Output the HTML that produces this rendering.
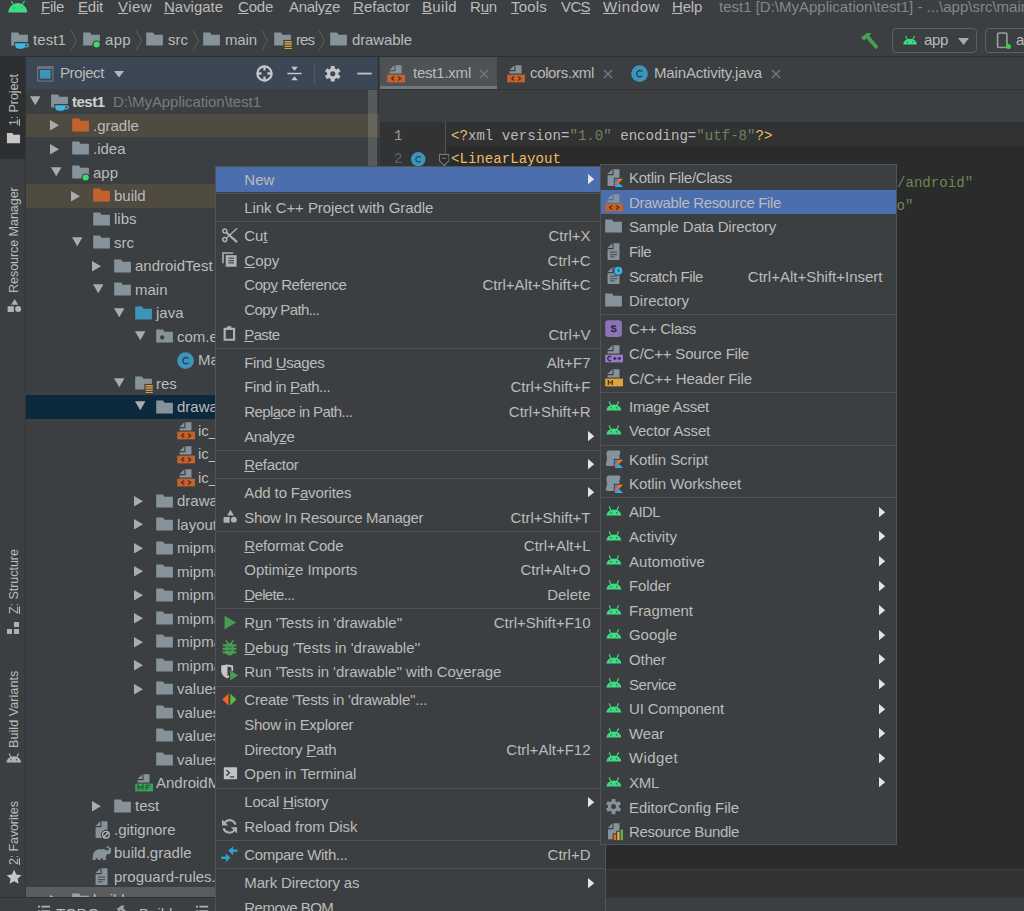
<!DOCTYPE html>
<html><head><meta charset="utf-8"><title>Android Studio</title>
<style>
*{margin:0;padding:0;box-sizing:border-box}
html,body{width:1024px;height:911px;overflow:hidden;background:#3c3f41}
body{position:relative;font-family:"Liberation Sans",sans-serif;font-size:15px;color:#bbbbbb;line-height:1}
.a{position:absolute}
.t{position:absolute;white-space:nowrap;line-height:20px;height:20px}
.mono{font-family:"Liberation Mono",monospace}
u{text-decoration:underline;text-underline-offset:1.3px;text-decoration-thickness:1px}
svg{position:absolute;overflow:visible}
.v{position:absolute;white-space:nowrap;transform-origin:0 0;transform:rotate(-90deg);font-size:12.6px;line-height:16px;height:16px;color:#bbbbbb}
</style></head><body>
<svg width="0" height="0" style="position:absolute"><defs><linearGradient id="kg" x1="1" y1="0" x2="0" y2="1"><stop offset="0" stop-color="#f88909"/><stop offset=".55" stop-color="#f06a2a"/><stop offset="1" stop-color="#c757bc"/></linearGradient><symbol id="folder" viewBox="0 0 16 16"><path fill="#87939a" d="M1 13h14V4H7.98L6.7 2H1z"/></symbol><symbol id="folder-o" viewBox="0 0 16 16"><path fill="#c4622d" d="M1 13h14V4H7.98L6.7 2H1z"/></symbol><symbol id="folder-b" viewBox="0 0 16 16"><path fill="#3e93b8" d="M1 13h14V4H7.98L6.7 2H1z"/></symbol><symbol id="module" viewBox="0 0 16 16"><path fill="#87939a" d="M1 13h14V4H7.98L6.7 2H1z"/><circle cx="12.3" cy="12.2" r="3.5" fill="#3c3f41"/><circle cx="12.3" cy="12.2" r="2.550" fill="#3fdc6c"/></symbol><symbol id="proj" viewBox="0 0 16 16"><path fill="#87939a" d="M1 13h14V4H7.98L6.7 2H1z"/><path fill="#3c3f41" d="M3.5 10h12.5v6H3.5z"/><path fill="#40b6e0" d="M4.3 11h8.6v1.4a3.4 3.4 0 0 1-3.4 3.4H7.7a3.4 3.4 0 0 1-3.4-3.4z"/><path fill="none" stroke="#40b6e0" stroke-width="1.1" d="M12.7 11.6h1.4a1.2 1.2 0 0 1 0 2.5h-1.6"/></symbol><symbol id="resf" viewBox="0 0 16 16"><path fill="#87939a" d="M1 13h14V4H7.98L6.7 2H1z"/><path fill="#3c3f41" d="M8.700 8.300h7.500v8H8.700z"/><path fill="#d9a343" d="M9.700 9.300h6v1.100h-6zM9.700 11.200h6v1.100h-6zM9.700 13.100h6v1.100h-6zM9.700 15h6v1.100h-6z"/></symbol><symbol id="pkg" viewBox="0 0 16 16"><path fill="#87939a" d="M1 13h14V4H7.98L6.7 2H1z"/><circle cx="6" cy="8.800" r="1.800" fill="#3c3f41"/></symbol><symbol id="class" viewBox="0 0 16 16"><circle cx="8" cy="8" r="7" fill="#3f94b9"/><path fill="none" stroke="#214a5f" stroke-width="1.200" d="M10.300 6.500a2.600 2.600 0 1 0 0 3.200"/></symbol><symbol id="xml" viewBox="0 0 16 16"><path fill="#87939a" d="M8 1h5v7H3V6h5z"/><path fill="#87939a" d="M7 1v4H3z"/><path fill="#c4622d" d="M1 8.900h15v6.500H1z"/><path stroke="#5a2d17" stroke-width="1.1" fill="none" d="M6.900 10.400L4.700 12.150l2.200 1.750M10.100 10.400l2.200 1.750-2.200 1.750"/></symbol><symbol id="mf" viewBox="0 0 16 16"><path fill="#87939a" d="M8 1h5v7H3V6h5z"/><path fill="#87939a" d="M7 1v4H3z"/><path fill="#3e9e5c" d="M1 8.900h15v6.500H1z"/><path stroke="#215f35" stroke-width="1" fill="none" d="M3.300 14.200v-4l2.100 2.600 2.100-2.600v4M13.500 10.400h-3.300v3.800M10.200 12.200h2.700"/></symbol><symbol id="txt" viewBox="0 0 16 16"><path fill="#87939a" d="M8 1h5v14H3V6h5z"/><path fill="#87939a" d="M7 1v4H3z"/><path stroke="#4c565c" stroke-width="1" d="M5 8.500h6M5 10.500h6M5 12.500h4"/></symbol><symbol id="giti" viewBox="0 0 16 16"><path fill="#87939a" d="M8 1h5v14H3V6h5z"/><path fill="#87939a" d="M7 1v4H3z"/><circle cx="11.700" cy="12.300" r="4.300" fill="#3c3f41"/><circle cx="11.700" cy="12.300" r="2.800" fill="none" stroke="#b4b8bb" stroke-width="1.100"/><path stroke="#b4b8bb" stroke-width="1.100" d="M9.800 14.200l3.800-3.800"/></symbol><symbol id="gradle" viewBox="0 0 16 16"><path fill="#87939a" d="M15.2 3.3c-.6-1.3-2-1.7-3-1.2-.6.3-.4 1 .1.9.7-.2 1.4.1 1.7.8.4 1-.6 2-1.6 1.600-.6-.2-1.200-.9-2.300-.9H6.500C3.600 4.500 1.200 6.600.8 9.400c-.2 1.300-.2 2.600-.2 4h2.300c0-1 .3-1.700 1-1.700s1 .700 1 1.700h2.300c0-1 .3-1.700 1-1.700s1 .7 1 1.700h2.300c0-2.200.200-3.800 1.300-5 .5.200 1.100.200 1.700-.100 1.900-.800 2.400-3.200 1.700-5z"/></symbol><symbol id="android" viewBox="0 0 16 16"><path fill="#3ddc84" d="M2 11.4a6.25 5.2 0 0 1 12.5 0z"/><path stroke="#3ddc84" stroke-width="1" stroke-linecap="round" fill="none" d="M5.7 7L4.5 4M10.8 7l1.3-3"/><circle cx="5.9" cy="9.1" r=".65" fill="#2f6b4a"/><circle cx="10.6" cy="9.1" r=".65" fill="#2f6b4a"/></symbol><symbol id="android-g" viewBox="0 0 16 16"><path fill="#afb1b3" d="M2 11.4a6.25 5.2 0 0 1 12.5 0z"/><path stroke="#afb1b3" stroke-width="1" stroke-linecap="round" fill="none" d="M5.7 7L4.5 4M10.8 7l1.3-3"/><circle cx="5.9" cy="9.1" r=".65" fill="#3c3f41"/><circle cx="10.6" cy="9.1" r=".65" fill="#3c3f41"/></symbol><symbol id="arr-r" viewBox="0 0 9 10.5"><path fill="#a9acae" d="M0 0l9 5.250-9 5.250z"/></symbol><symbol id="arr-d" viewBox="0 0 10.5 9"><path fill="#a9acae" d="M0 0h10.500L5.250 9z"/></symbol><symbol id="marr" viewBox="0 0 6 10"><path fill="#e4e4e4" d="M0 0l6 5-6 5z"/></symbol><symbol id="cut" viewBox="0 0 16 16"><g fill="none" stroke="#afb1b3"><circle cx="4" cy="4.200" r="1.700" stroke-width="1.300"/><circle cx="4" cy="11.400" r="1.700" stroke-width="1.300"/><path stroke-width="1.800" d="M5.300 5.500L14.300 13.500"/><path stroke-width="1.100" d="M5.300 10.200L14.300 1.900"/></g></symbol><symbol id="copy" viewBox="0 0 16 16"><path fill="none" stroke="#afb1b3" stroke-width="1.300" d="M2.500 10.300V1.600H11"/><path fill="#afb1b3" d="M4.800 3.500h9.100v9.700H4.800z"/><path stroke="#45494b" stroke-width="1.100" d="M7 5.900h4.700M7 8h4.700M7 10h4.700"/></symbol><symbol id="paste" viewBox="0 0 16 16"><path fill="none" stroke="#afb1b3" stroke-width="1.800" d="M3.900 3.300h7.900v9.100H3.900z"/><path fill="#afb1b3" d="M5.900 1h3.600v2.500H5.900z"/></symbol><symbol id="rm" viewBox="0 0 16 16"><path fill="#afb1b3" d="M8.800 2.400l2.800 4.700H5.900zM3 8.400h5.100v4.700H3z"/><circle cx="11.600" cy="10.600" r="2.450" fill="#afb1b3"/></symbol><symbol id="run" viewBox="0 0 16 16"><path fill="#499c54" d="M3.800 2.200L13.400 8 3.800 13.800z"/></symbol><symbol id="debug" viewBox="0 0 16 16"><g fill="#499c54"><rect x="4.700" y="4.200" width="6.600" height="10.500" rx="3.200"/><rect x="2.200" y="5.200" width="11.600" height="1.900" rx=".6"/><rect x="2.200" y="8.100" width="11.600" height="1.900" rx=".6"/><rect x="2.200" y="11" width="11.600" height="1.900" rx=".6"/></g><path stroke="#499c54" stroke-width="1.300" fill="none" d="M4.900 1.800l1.900 3M11.100 1.800l-1.900 3"/><path fill="#3c3f41" opacity=".75" d="M6.400 7.250h3.200v.8H6.400zM6.400 10.100h3.200v.8H6.400z"/></symbol><symbol id="cover" viewBox="0 0 16 16"><path fill="#c4c6c8" d="M1 3l5-1 5 1v4c0 3.500-2 5.500-5 6.800C3 12.500 1 10.500 1 7z"/><path fill="#3c3f41" d="M6.300 3.700l3.200.7V7c0 2.300-1.200 3.900-3.200 5z"/><path fill="#3c3f41" d="M7.600 5.800L16 11l-8.400 5.400z"/><path fill="#499c54" d="M8.500 6.900l6.700 4.200-6.700 4.300z"/></symbol><symbol id="create" viewBox="0 0 16 16"><path fill="#f26522" d="M7.200 3v10L1.900 8z"/><path fill="#62b543" d="M8.600 3v10l5.200-5z"/></symbol><symbol id="term" viewBox="0 0 16 16"><rect x="3.200" y="2.800" width="11.100" height="9.900" rx=".5" fill="#c0c2c4"/><path fill="none" stroke="#3c3f41" stroke-width="1.100" d="M5.300 5l2.600 2.400-2.600 2.400M8.300 10.800h3.700"/></symbol><symbol id="reload" viewBox="0 0 16 16"><g fill="none" stroke="#afb1b3" stroke-width="1.700"><path d="M13 6.400A5.100 5.100 0 0 0 4 4.700"/><path d="M3 9.400a5.100 5.100 0 0 0 9 1.700"/></g><path fill="#afb1b3" d="M1.700 2v5.200h5.200zM14.300 13.800V8.600H9.100z"/></symbol><symbol id="compare" viewBox="0 0 16 16"><g fill="#2f9fd6"><path d="M6.900 4.700L11 1v2.700h3.800v2H11v2.900z"/><path d="M8.700 10.700L4.900 7.100v2.600H1.100v2h3.800v2.800z"/></g></symbol><symbol id="ktfile" viewBox="0 0 16 16"><path fill="#87939a" d="M8 1h5v14H3V6h5z"/><path fill="#87939a" d="M7 1v4H3z"/><path fill="#3c3f41" d="M8.2 8.2H16V16H8.2z"/><path fill="#3a8bea" d="M9 9h3.5L9 12.700z"/><path fill="url(#kg)" d="M12.500 9H16l-7 7v-3.300z"/><path fill="#1fb4f5" d="M12.500 12.500L16 16H9z"/></symbol><symbol id="ktscript" viewBox="0 0 16 16"><path fill="#87939a" d="M3.800 1.200h8.800c1.300.2 1.400 1.500.8 2.800-.6 1.300-.7 2.500-.2 4.100v6.100H3.300c-1.600 0-2.200-1.300-1.500-2.900.8-1.700.8-3.200.5-5.200-.4-2.300-.1-4.900 1.500-4.900z"/><path fill="#3c3f41" d="M8.2 8.2H16V16H8.2z"/><path fill="#3a8bea" d="M9 9h3.5L9 12.700z"/><path fill="url(#kg)" d="M12.500 9H16l-7 7v-3.300z"/><path fill="#1fb4f5" d="M12.500 12.500L16 16H9z"/></symbol><symbol id="scratch" viewBox="0 0 16 16"><path fill="#87939a" d="M8 1h5v14H3V6h5z"/><path fill="#87939a" d="M7 1v4H3z"/><path stroke="#4c565c" stroke-width="1" d="M5 8.500h6M5 10.500h6M5 12.500h4"/><circle cx="12" cy="4" r="4.200" fill="#3c3f41"/><circle cx="12" cy="4" r="3.300" fill="#3bb3e6"/><path fill="none" stroke="#1d4a63" stroke-width="1" d="M12 2.200v2h1.300"/></symbol><symbol id="cppclass" viewBox="0 0 16 16"><rect x="1" y="1" width="14" height="14" rx="2.700" fill="#8c74b6"/><path fill="none" stroke="#3a2d52" stroke-width="1.500" d="M10 6.600C9.700 6 9 5.700 8.100 5.700c-1 0-1.700.4-1.700 1.100 0 1.600 3.600.7 3.600 2.400 0 .7-.8 1.200-1.800 1.200S6.400 10 6.100 9.300"/></symbol><symbol id="cpp" viewBox="0 0 16 16"><path fill="#87939a" d="M8 1h5v7H3V6h5z"/><path fill="#87939a" d="M7 1v4H3z"/><path fill="#9a7cc6" d="M1 8.900h15v6.500H1z"/><path fill="none" stroke="#3d2f57" stroke-width="1.200" d="M6 10.900a1.700 1.700 0 1 0 0 2.500M7.600 12.150h2.800M9 10.800v2.700M11.400 12.150h2.800M12.800 10.800v2.700"/></symbol><symbol id="hdr" viewBox="0 0 16 16"><path fill="#87939a" d="M8 1h5v7H3V6h5z"/><path fill="#87939a" d="M7 1v4H3z"/><path fill="#e2a338" d="M1 8.900h15v6.500H1z"/><path fill="none" stroke="#5a3f10" stroke-width="1.300" d="M3.700 10.100v4.100M7 10.100v4.100M3.700 12.150H7"/></symbol><symbol id="gear" viewBox="0 0 16 16"><path fill="#87939a" fill-rule="evenodd" d="M6.43 3.57L6.43 1.59L9.57 1.59L9.57 3.57L11.05 4.43L12.77 3.44L14.34 6.15L12.62 7.14L12.62 8.86L14.34 9.85L12.77 12.56L11.05 11.57L9.57 12.43L9.57 14.41L6.43 14.41L6.43 12.43L4.95 11.57L3.23 12.56L1.66 9.85L3.38 8.86L3.38 7.14L1.66 6.15L3.23 3.44L4.95 4.43zM5.90 8.00a2.10 2.10 0 1 0 4.20 0a2.10 2.10 0 1 0 -4.20 0z"/></symbol><symbol id="gear-l" viewBox="0 0 16 16"><path fill="#c4c6c8" fill-rule="evenodd" d="M6.43 3.57L6.43 1.59L9.57 1.59L9.57 3.57L11.05 4.43L12.77 3.44L14.34 6.15L12.62 7.14L12.62 8.86L14.34 9.85L12.77 12.56L11.05 11.57L9.57 12.43L9.57 14.41L6.43 14.41L6.43 12.43L4.95 11.57L3.23 12.56L1.66 9.85L3.38 8.86L3.38 7.14L1.66 6.15L3.23 3.44L4.95 4.43zM5.90 8.00a2.10 2.10 0 1 0 4.20 0a2.10 2.10 0 1 0 -4.20 0z"/></symbol><symbol id="bundle" viewBox="0 0 16 16"><path fill="#87939a" d="M8 1h5v13.500H3.400V6H8z"/><path fill="#87939a" d="M7 1v4H3.400z"/><path fill="#3c3f41" d="M7.300 9.400h2.900V7.300h2.900V5.400H16.500V16H7.300z"/><path fill="#f26522" d="M8.200 10.300h1.900v4.900H8.200z"/><path fill="#f4af3d" d="M11.100 8.200H13v7h-1.900z"/><path fill="#62b543" d="M13.900 6.300h2v8.900h-2z"/></symbol><symbol id="target" viewBox="0 0 16 16"><g fill="none" stroke="#c4c6c8" stroke-width="1.900"><circle cx="8" cy="8" r="6"/><path d="M8 1.500v4M8 10.500v4M1.500 8h4M10.500 8h4"/></g></symbol><symbol id="collapse" viewBox="0 0 16 16"><path fill="#c4c6c8" d="M2 7.300h12v1.400H2zM5.200 2.400h5.600L8 5.600zM5.200 13.600h5.600L8 10.400z"/></symbol><symbol id="minus" viewBox="0 0 16 16"><path fill="#c4c6c8" d="M2 7.300h12v1.500H2z"/></symbol><symbol id="hammer" viewBox="0 0 16 16"><path fill="#499c54" d="M.8 5.400L5.600 1.600h3.600L7.700 4.200l7.500 8.800-2.300 2-7.500-8.800L3.100 8.100z"/></symbol><symbol id="hammer-g" viewBox="0 0 16 16"><path fill="#9da0a2" d="M.8 5.400L5.600 1.600h3.600L7.700 4.200l7.500 8.800-2.300 2-7.500-8.800L3.100 8.100z"/></symbol><symbol id="device" viewBox="0 0 16 16"><rect x="3.500" y="1" width="9" height="14" rx="1.300" fill="none" stroke="#9a9da0" stroke-width="1.600"/></symbol><symbol id="star" viewBox="0 0 16 16"><path fill="#c4c6c8" d="M8 .8l2.200 4.700 5.100.6-3.800 3.500 1 5.100L8 12.200l-4.500 2.500 1-5.100L.7 6.100l5.100-.6z"/></symbol><symbol id="struct" viewBox="0 0 16 16"><path fill="#afb1b3" d="M9 2h5v5H9zM2 9h5v5H2zM9 9h5v5H9z"/></symbol><symbol id="list" viewBox="0 0 16 16"><path fill="#afb1b3" d="M1 2h2.500v2H1zM5 2h10v2H5zM1 7h2.500v2H1zM5 7h10v2H5zM1 12h2.500v2H1zM5 12h10v2H5z"/></symbol><symbol id="fsm" viewBox="0 0 16 16"><path fill="#c4c6c8" d="M1 13h14V4H7.98L6.7 2H1z"/></symbol><symbol id="x" viewBox="0 0 10 10"><path stroke="#777a7c" stroke-width="1.200" fill="none" d="M1 1l8 8M9 1l-8 8"/></symbol><symbol id="fold" viewBox="0 0 10 12"><path fill="#2b2b2b" stroke="#7a7d80" stroke-width="1" d="M.5.500h9v6L5 11 .5 6.500z"/><path stroke="#7a7d80" stroke-width="1" d="M3 4h4"/></symbol></defs></svg>
<div class="a" style="left:0.0px;top:0.0px;width:1024.0px;height:22.0px;background:#3c3f41;"></div>
<div class="a" style="left:0.0px;top:22.0px;width:1024.0px;height:1.0px;background:#414446;"></div>
<div class="a" style="left:0.0px;top:23.0px;width:1024.0px;height:1.0px;background:#474a4c;"></div>
<svg class="a" style="left:0;top:0" width="40" height="20"><path fill="#3ddc84" d="M8.200 12.600a9.550 9.500 0 0 1 19.100 0z"/><path stroke="#3ddc84" stroke-width="1.100" stroke-linecap="round" d="M13.400 4.500L11.400 1.300M22.200 4.500l2.200-3.200"/><circle cx="13.900" cy="7.900" r=".700" fill="#2a8a55"/><circle cx="21.700" cy="7.900" r=".700" fill="#2a8a55"/></svg>
<div class="t" style="left:41.0px;top:-3.1px;font-size:15px;letter-spacing:-0.292px;"><u>F</u>ile</div>
<div class="t" style="left:78.0px;top:-3.1px;font-size:15px;letter-spacing:-0.212px;"><u>E</u>dit</div>
<div class="t" style="left:118.0px;top:-3.1px;font-size:15px;letter-spacing:0.440px;"><u>V</u>iew</div>
<div class="t" style="left:164.0px;top:-3.1px;font-size:15px;letter-spacing:-0.025px;"><u>N</u>avigate</div>
<div class="t" style="left:238.0px;top:-3.1px;font-size:15px;letter-spacing:-0.214px;"><u>C</u>ode</div>
<div class="t" style="left:289.0px;top:-3.1px;font-size:15px;letter-spacing:-0.338px;">Analy<u>z</u>e</div>
<div class="t" style="left:353.0px;top:-3.1px;font-size:15px;letter-spacing:0.039px;"><u>R</u>efactor</div>
<div class="t" style="left:422.0px;top:-3.1px;font-size:15px;letter-spacing:0.329px;"><u>B</u>uild</div>
<div class="t" style="left:470.0px;top:-3.1px;font-size:15px;letter-spacing:-0.172px;">R<u>u</u>n</div>
<div class="t" style="left:511.0px;top:-3.1px;font-size:15px;letter-spacing:0.197px;"><u>T</u>ools</div>
<div class="t" style="left:561.0px;top:-3.1px;font-size:15px;letter-spacing:-0.615px;">VC<u>S</u></div>
<div class="t" style="left:603.0px;top:-3.1px;font-size:15px;letter-spacing:0.609px;"><u>W</u>indow</div>
<div class="t" style="left:672.0px;top:-3.1px;font-size:15px;letter-spacing:-0.212px;"><u>H</u>elp</div>
<div class="t" style="left:719.0px;top:-3.0px;font-size:15px;color:#84878a;">test1 [D:\MyApplication\test1] - ...\app\src\main\res</div>
<div class="a" style="left:0.0px;top:23.0px;width:1024.0px;height:33.0px;background:#3c3f41;"></div>
<div class="a" style="left:0.0px;top:56.0px;width:1024.0px;height:1.0px;background:#2d2f30;"></div>
<svg class="a" style="left:9.5px;top:30.0px" width="19.1" height="19.1" ><use href="#proj"/></svg>
<div class="t" style="left:33.0px;top:30.0px;font-size:15px;letter-spacing:0.096px;">test1</div>
<svg class="a" style="left:70.0px; top:30px" width="8" height="21"><path d="M1 .5l5.500 10L1 20.500" fill="none" stroke="#5e6163" stroke-width="1"/></svg>
<svg class="a" style="left:81.5px;top:30.0px" width="19.1" height="19.1" ><use href="#module"/></svg>
<div class="t" style="left:105.0px;top:30.0px;font-size:15px;letter-spacing:0.325px;">app</div>
<svg class="a" style="left:135.0px; top:30px" width="8" height="21"><path d="M1 .5l5.500 10L1 20.500" fill="none" stroke="#5e6163" stroke-width="1"/></svg>
<svg class="a" style="left:144.5px;top:30.0px" width="19.1" height="19.1" ><use href="#folder"/></svg>
<div class="t" style="left:168.0px;top:30.0px;font-size:15px;letter-spacing:0.001px;">src</div>
<svg class="a" style="left:192.0px; top:30px" width="8" height="21"><path d="M1 .5l5.500 10L1 20.500" fill="none" stroke="#5e6163" stroke-width="1"/></svg>
<svg class="a" style="left:201.5px;top:30.0px" width="19.1" height="19.1" ><use href="#folder"/></svg>
<div class="t" style="left:225.0px;top:30.0px;font-size:15px;letter-spacing:-0.128px;">main</div>
<svg class="a" style="left:261.0px; top:30px" width="8" height="21"><path d="M1 .5l5.500 10L1 20.500" fill="none" stroke="#5e6163" stroke-width="1"/></svg>
<svg class="a" style="left:272.5px;top:30.0px" width="19.1" height="19.1" ><use href="#resf"/></svg>
<div class="t" style="left:296.0px;top:30.0px;font-size:15px;letter-spacing:-0.946px;">res</div>
<svg class="a" style="left:318.0px; top:30px" width="8" height="21"><path d="M1 .5l5.500 10L1 20.500" fill="none" stroke="#5e6163" stroke-width="1"/></svg>
<svg class="a" style="left:328.5px;top:30.0px" width="19.1" height="19.1" ><use href="#folder"/></svg>
<div class="t" style="left:352.0px;top:30.0px;font-size:15px;letter-spacing:-0.109px;">drawable</div>
<svg class="a" style="left:859.5px;top:30.5px" width="19.5" height="19.5" ><use href="#hammer"/></svg>
<div class="a" style="left:892px;top:27.5px;width:85px;height:25.5px;border:1px solid #5e6062;border-radius:4px"></div>
<svg class="a" style="left:901.0px;top:31.5px" width="17.5" height="17.5" ><use href="#android"/></svg>
<div class="t" style="left:924.0px;top:30.0px;font-size:15px;letter-spacing:-0.342px;">app</div>
<svg class="a" style="left:958.3px;top:37.5px" width="10.5" height="6.5"><path d="M0 0h11L5.500 7z" fill="#a8abad"/></svg>
<div class="a" style="left:985px;top:27.5px;width:60px;height:25.5px;border:1px solid #5e6062;border-radius:4px"></div>
<svg class="a" style="left:994.3px;top:32.0px" width="16.5" height="16.5" ><use href="#device"/></svg>
<div class="a" style="left:1006.3px;top:44.3px;width:5px;height:5px;border-radius:3px;background:#35d335"></div>
<div class="t" style="left:1016.0px;top:30.0px;font-size:15px;">a</div>
<div class="a" style="left:0.0px;top:57.0px;width:25.0px;height:840.0px;background:#3c3f41;"></div>
<div class="a" style="left:0.0px;top:57.0px;width:25.0px;height:102.0px;background:#2d2f30;"></div>
<div class="a" style="left:25.0px;top:57.0px;width:1.0px;height:840.0px;background:#323537;"></div>
<div class="v" style="left:6.0px;top:125.5px;letter-spacing:-0.133px"><u>1</u>: Project</div>
<svg class="a" style="left:5.8px;top:130.8px" width="15.0" height="15.0" ><use href="#fsm"/></svg>
<div class="v" style="left:6.0px;top:292.5px;letter-spacing:-0.086px">Resource Manager</div>
<svg class="a" style="left:3.6px;top:295.6px" width="19.5" height="19.5" ><use href="#rm"/></svg>
<div class="v" style="left:6.0px;top:613.5px;letter-spacing:-0.079px"><u>Z</u>: Structure</div>
<svg class="a" style="left:5.0px;top:619.5px" width="16.0" height="16.0" ><use href="#struct"/></svg>
<div class="v" style="left:6.0px;top:747.5px;letter-spacing:0.039px">Build Variants</div>
<svg class="a" style="left:3.8px;top:749.2px" width="19.0" height="19.0" ><use href="#android-g"/></svg>
<div class="v" style="left:6.0px;top:865.0px;letter-spacing:-0.163px"><u>2</u>: Favorites</div>
<svg class="a" style="left:5.6px;top:868.6px" width="16.2" height="16.2" ><use href="#star"/></svg>
<div class="a" style="left:26.0px;top:57.0px;width:351.0px;height:32.0px;background:#3b4754;"></div>
<div class="a" style="left:378.2px;top:57.0px;width:1.3px;height:840.0px;background:#313436;"></div>
<svg class="a" style="left:36.600px;top:66px" width="17" height="16"><rect x=".6" y=".6" width="15.300" height="14.500" fill="#3b4754" stroke="#69747c" stroke-width="1.200"/><rect x=".6" y=".6" width="15.300" height="2.400" fill="#69747c"/><rect x="2.900" y="4" width="10.700" height="8.600" fill="#3f94b9"/></svg>
<div class="t" style="left:60.0px;top:63.0px;font-size:15px;letter-spacing:-0.384px;">Project</div>
<svg class="a" style="left:113.700px;top:71.200px" width="10" height="6.500"><path d="M0 0h10L5 6.500z" fill="#b4b7b9"/></svg>
<svg class="a" style="left:254.5px;top:63.5px" width="19.0" height="19.0" ><use href="#target"/></svg>
<svg class="a" style="left:285.0px;top:63.5px" width="19.0" height="19.0" ><use href="#collapse"/></svg>
<div class="a" style="left:313.5px;top:63.0px;width:1.0px;height:21.0px;background:#4f5a66;"></div>
<svg class="a" style="left:323.0px;top:63.5px" width="19.5" height="19.5" ><use href="#gear-l"/></svg>
<svg class="a" style="left:354.5px;top:63.5px" width="19.0" height="19.0" ><use href="#minus"/></svg>
<div class="a" style="left:26px;top:89px;width:353px;height:808px;overflow:hidden">
<svg class="a" style="left:4.1px;top:7.1px" width="10.500" height="9.500"><use href="#arr-d"/></svg>
<svg class="a" style="left:24.3px;top:3.4px" width="19.1" height="19.1" ><use href="#proj"/></svg>
<div class="t" style="left:46.0px;top:3.0px;font-size:15px;color:#d0d0d0;letter-spacing:-0.504px;font-weight:bold;">test1</div>
<div class="t" style="left:87.0px;top:3.0px;font-size:15px;color:#787b7d;letter-spacing:-0.056px;">D:\MyApplication\test1</div>
<div class="a" style="left:0.0px;top:24.7px;width:353.0px;height:23.5px;background:#4f4b41;"></div>
<svg class="a" style="left:24.2px;top:31.0px" width="9" height="10.500"><use href="#arr-r"/></svg>
<svg class="a" style="left:45.3px;top:26.9px" width="19.1" height="19.1" ><use href="#folder-o"/></svg>
<div class="t" style="left:67.0px;top:26.5px;font-size:15px;">.gradle</div>
<svg class="a" style="left:24.2px;top:54.5px" width="9" height="10.500"><use href="#arr-r"/></svg>
<svg class="a" style="left:45.3px;top:50.3px" width="19.1" height="19.1" ><use href="#folder"/></svg>
<div class="t" style="left:67.0px;top:50.0px;font-size:15px;">.idea</div>
<svg class="a" style="left:25.1px;top:77.6px" width="10.500" height="9.500"><use href="#arr-d"/></svg>
<svg class="a" style="left:45.3px;top:73.8px" width="19.1" height="19.1" ><use href="#module"/></svg>
<div class="t" style="left:67.0px;top:73.5px;font-size:15px;">app</div>
<div class="a" style="left:0.0px;top:95.1px;width:353.0px;height:23.5px;background:#4f4b41;"></div>
<svg class="a" style="left:45.2px;top:101.5px" width="9" height="10.500"><use href="#arr-r"/></svg>
<svg class="a" style="left:66.3px;top:97.3px" width="19.1" height="19.1" ><use href="#folder-o"/></svg>
<div class="t" style="left:88.0px;top:97.0px;font-size:15px;">build</div>
<svg class="a" style="left:66.3px;top:120.8px" width="19.1" height="19.1" ><use href="#folder"/></svg>
<div class="t" style="left:88.0px;top:120.4px;font-size:15px;">libs</div>
<svg class="a" style="left:46.1px;top:148.0px" width="10.500" height="9.500"><use href="#arr-d"/></svg>
<svg class="a" style="left:66.3px;top:144.3px" width="19.1" height="19.1" ><use href="#folder"/></svg>
<div class="t" style="left:88.0px;top:143.9px;font-size:15px;">src</div>
<svg class="a" style="left:66.2px;top:171.9px" width="9" height="10.500"><use href="#arr-r"/></svg>
<svg class="a" style="left:87.3px;top:167.8px" width="19.1" height="19.1" ><use href="#folder"/></svg>
<div class="t" style="left:109.0px;top:167.4px;font-size:15px;">androidTest</div>
<svg class="a" style="left:67.1px;top:195.0px" width="10.500" height="9.500"><use href="#arr-d"/></svg>
<svg class="a" style="left:87.3px;top:191.2px" width="19.1" height="19.1" ><use href="#folder"/></svg>
<div class="t" style="left:109.0px;top:190.9px;font-size:15px;">main</div>
<svg class="a" style="left:88.1px;top:218.5px" width="10.500" height="9.500"><use href="#arr-d"/></svg>
<svg class="a" style="left:108.3px;top:214.7px" width="19.1" height="19.1" ><use href="#folder-b"/></svg>
<div class="t" style="left:130.0px;top:214.4px;font-size:15px;">java</div>
<svg class="a" style="left:109.1px;top:241.9px" width="10.500" height="9.500"><use href="#arr-d"/></svg>
<svg class="a" style="left:129.3px;top:238.2px" width="19.1" height="19.1" ><use href="#pkg"/></svg>
<div class="t" style="left:151.0px;top:237.8px;font-size:15px;">com.example.test1</div>
<svg class="a" style="left:150.3px;top:261.7px" width="19.1" height="19.1" ><use href="#class"/></svg>
<div class="t" style="left:172.0px;top:261.3px;font-size:15px;">MainActivity</div>
<svg class="a" style="left:88.1px;top:288.9px" width="10.500" height="9.500"><use href="#arr-d"/></svg>
<svg class="a" style="left:108.3px;top:285.1px" width="19.1" height="19.1" ><use href="#resf"/></svg>
<div class="t" style="left:130.0px;top:284.8px;font-size:15px;">res</div>
<div class="a" style="left:0.0px;top:306.4px;width:353.0px;height:23.5px;background:#0d293e;"></div>
<svg class="a" style="left:109.1px;top:312.4px" width="10.500" height="9.500"><use href="#arr-d"/></svg>
<svg class="a" style="left:129.3px;top:308.6px" width="19.1" height="19.1" ><use href="#folder"/></svg>
<div class="t" style="left:151.0px;top:308.3px;font-size:15px;">drawable</div>
<svg class="a" style="left:150.3px;top:332.1px" width="19.1" height="19.1" ><use href="#xml"/></svg>
<div class="t" style="left:172.0px;top:331.8px;font-size:15px;">ic_launcher_background.xml</div>
<svg class="a" style="left:150.3px;top:355.6px" width="19.1" height="19.1" ><use href="#xml"/></svg>
<div class="t" style="left:172.0px;top:355.2px;font-size:15px;">ic_launcher_foreground.xml</div>
<svg class="a" style="left:150.3px;top:379.1px" width="19.1" height="19.1" ><use href="#xml"/></svg>
<div class="t" style="left:172.0px;top:378.7px;font-size:15px;">ic_test.xml</div>
<svg class="a" style="left:108.2px;top:406.7px" width="9" height="10.500"><use href="#arr-r"/></svg>
<svg class="a" style="left:129.3px;top:402.6px" width="19.1" height="19.1" ><use href="#folder"/></svg>
<div class="t" style="left:151.0px;top:402.2px;font-size:15px;">drawable-v24</div>
<svg class="a" style="left:108.2px;top:430.2px" width="9" height="10.500"><use href="#arr-r"/></svg>
<svg class="a" style="left:129.3px;top:426.0px" width="19.1" height="19.1" ><use href="#folder"/></svg>
<div class="t" style="left:151.0px;top:425.7px;font-size:15px;">layout</div>
<svg class="a" style="left:108.2px;top:453.7px" width="9" height="10.500"><use href="#arr-r"/></svg>
<svg class="a" style="left:129.3px;top:449.5px" width="19.1" height="19.1" ><use href="#folder"/></svg>
<div class="t" style="left:151.0px;top:449.2px;font-size:15px;">mipmap-anydpi-v26</div>
<svg class="a" style="left:108.2px;top:477.1px" width="9" height="10.500"><use href="#arr-r"/></svg>
<svg class="a" style="left:129.3px;top:473.0px" width="19.1" height="19.1" ><use href="#folder"/></svg>
<div class="t" style="left:151.0px;top:472.6px;font-size:15px;">mipmap-hdpi</div>
<svg class="a" style="left:108.2px;top:500.6px" width="9" height="10.500"><use href="#arr-r"/></svg>
<svg class="a" style="left:129.3px;top:496.5px" width="19.1" height="19.1" ><use href="#folder"/></svg>
<div class="t" style="left:151.0px;top:496.1px;font-size:15px;">mipmap-mdpi</div>
<svg class="a" style="left:108.2px;top:524.1px" width="9" height="10.500"><use href="#arr-r"/></svg>
<svg class="a" style="left:129.3px;top:520.0px" width="19.1" height="19.1" ><use href="#folder"/></svg>
<div class="t" style="left:151.0px;top:519.6px;font-size:15px;">mipmap-xhdpi</div>
<svg class="a" style="left:108.2px;top:547.6px" width="9" height="10.500"><use href="#arr-r"/></svg>
<svg class="a" style="left:129.3px;top:543.4px" width="19.1" height="19.1" ><use href="#folder"/></svg>
<div class="t" style="left:151.0px;top:543.1px;font-size:15px;">mipmap-xxhdpi</div>
<svg class="a" style="left:108.2px;top:571.1px" width="9" height="10.500"><use href="#arr-r"/></svg>
<svg class="a" style="left:129.3px;top:566.9px" width="19.1" height="19.1" ><use href="#folder"/></svg>
<div class="t" style="left:151.0px;top:566.6px;font-size:15px;">mipmap-xxxhdpi</div>
<svg class="a" style="left:108.2px;top:594.5px" width="9" height="10.500"><use href="#arr-r"/></svg>
<svg class="a" style="left:129.3px;top:590.4px" width="19.1" height="19.1" ><use href="#folder"/></svg>
<div class="t" style="left:151.0px;top:590.0px;font-size:15px;">values</div>
<svg class="a" style="left:129.3px;top:613.9px" width="19.1" height="19.1" ><use href="#folder"/></svg>
<div class="t" style="left:151.0px;top:613.5px;font-size:15px;">values-night</div>
<svg class="a" style="left:129.3px;top:637.4px" width="19.1" height="19.1" ><use href="#folder"/></svg>
<div class="t" style="left:151.0px;top:637.0px;font-size:15px;">values-v21</div>
<svg class="a" style="left:129.3px;top:660.8px" width="19.1" height="19.1" ><use href="#folder"/></svg>
<div class="t" style="left:151.0px;top:660.5px;font-size:15px;">values-v23</div>
<svg class="a" style="left:108.3px;top:684.3px" width="19.1" height="19.1" ><use href="#mf"/></svg>
<div class="t" style="left:130.0px;top:684.0px;font-size:15px;">AndroidManifest.xml</div>
<svg class="a" style="left:66.2px;top:711.9px" width="9" height="10.500"><use href="#arr-r"/></svg>
<svg class="a" style="left:87.3px;top:707.8px" width="19.1" height="19.1" ><use href="#folder"/></svg>
<div class="t" style="left:109.0px;top:707.4px;font-size:15px;">test</div>
<svg class="a" style="left:66.3px;top:731.3px" width="19.1" height="19.1" ><use href="#giti"/></svg>
<div class="t" style="left:88.0px;top:730.9px;font-size:15px;">.gitignore</div>
<svg class="a" style="left:66.3px;top:754.8px" width="19.1" height="19.1" ><use href="#gradle"/></svg>
<div class="t" style="left:88.0px;top:754.4px;font-size:15px;">build.gradle</div>
<svg class="a" style="left:66.3px;top:778.2px" width="19.1" height="19.1" ><use href="#txt"/></svg>
<div class="t" style="left:88.0px;top:777.9px;font-size:15px;">proguard-rules.pro</div>
<svg class="a" style="left:24.2px;top:805.9px" width="9" height="10.500"><use href="#arr-r"/></svg>
<svg class="a" style="left:45.3px;top:801.7px" width="19.1" height="19.1" ><use href="#folder"/></svg>
<div class="t" style="left:67.0px;top:801.4px;font-size:15px;">build</div>
</div>
<div class="a" style="left:368.0px;top:90.0px;width:9.0px;height:76.0px;background:rgba(255,255,255,0.140);"></div>
<div class="a" style="left:26.0px;top:887.0px;width:191.0px;height:9.5px;background:rgba(255,255,255,0.155);"></div>
<div class="a" style="left:0.0px;top:897.0px;width:1024.0px;height:1.0px;background:#2f3133;"></div>
<div class="a" style="left:0.0px;top:898.0px;width:1024.0px;height:13.0px;background:#3c3f41;"></div>
<svg class="a" style="left:37.0px;top:904.0px" width="14.0" height="14.0" ><use href="#list"/></svg>
<div class="t" style="left:56.0px;top:904.0px;font-size:15px;">TODO</div>
<svg class="a" style="left:116.0px;top:904.0px" width="15.0" height="15.0" ><use href="#hammer-g"/></svg>
<div class="t" style="left:139.0px;top:904.0px;font-size:15px;">Build</div>
<svg class="a" style="left:195.0px;top:904.0px" width="14.0" height="14.0" ><use href="#list"/></svg>
<div class="a" style="left:380.0px;top:57.0px;width:644.0px;height:32.0px;background:#3c3f41;"></div>
<div class="a" style="left:380.0px;top:57.0px;width:117.0px;height:32.0px;background:#4e5254;"></div>
<div class="a" style="left:380.0px;top:85.5px;width:117.0px;height:3.5px;background:#72777b;"></div>
<div class="a" style="left:380.0px;top:89.0px;width:644.0px;height:1.0px;background:#323232;"></div>
<svg class="a" style="left:386.0px;top:63.5px" width="19.1" height="19.1" ><use href="#xml"/></svg>
<div class="t" style="left:413.0px;top:63.0px;font-size:15px;letter-spacing:-0.224px;">test1.xml</div>
<svg class="a" style="left:479.0px;top:68.5px" width="10.0" height="10.0" ><use href="#x"/></svg>
<svg class="a" style="left:506.0px;top:63.5px" width="19.1" height="19.1" ><use href="#xml"/></svg>
<div class="t" style="left:530.0px;top:63.0px;font-size:15px;letter-spacing:-0.351px;">colors.xml</div>
<svg class="a" style="left:602.5px;top:68.5px" width="10.0" height="10.0" ><use href="#x"/></svg>
<svg class="a" style="left:629.5px;top:63.5px" width="19.1" height="19.1" ><use href="#class"/></svg>
<div class="t" style="left:654.0px;top:63.0px;font-size:15px;letter-spacing:-0.152px;">MainActivity.java</div>
<svg class="a" style="left:770.5px;top:68.5px" width="10.0" height="10.0" ><use href="#x"/></svg>
<div class="a" style="left:380.0px;top:90.0px;width:644.0px;height:32.0px;background:#3c3f41;"></div>
<div class="a" style="left:380.0px;top:122.0px;width:644.0px;height:748.0px;background:#2b2b2b;"></div>
<div class="a" style="left:445.0px;top:122.0px;width:579.0px;height:24.3px;background:#323232;"></div>
<div class="a" style="left:380.0px;top:122.0px;width:65.0px;height:748.0px;background:#313335;"></div>
<div class="a" style="left:444.5px;top:122.0px;width:1.0px;height:748.0px;background:#555555;"></div>
<div class="a" style="left:380.0px;top:869.3px;width:644.0px;height:1.0px;background:#3a3d3f;"></div>
<div class="a" style="left:380.0px;top:870.3px;width:644.0px;height:27.7px;background:#313335;"></div>
<div class="t" style="left:394.0px;top:126.0px;font-size:14.100px;font-family:'Liberation Mono',monospace;"><span style="color:#999a9a">1</span></div>
<div class="t" style="left:394.0px;top:149.0px;font-size:14.100px;font-family:'Liberation Mono',monospace;"><span style="color:#606366">2</span></div>
<svg class="a" style="left:409.5px;top:150.5px" width="16.5" height="16.5" ><use href="#class"/></svg>
<svg class="a" style="left:439px;top:153.500px" width="10.500" height="12.500"><use href="#fold"/></svg>
<div class="t" style="left:451.0px;top:126.0px;font-size:14.100px;font-family:'Liberation Mono',monospace;"><span style="color:#e8bf6a">&lt;?</span><span style="color:#bababa">xml version=</span><span style="color:#6a8759">"1.0"</span><span style="color:#bababa"> encoding=</span><span style="color:#6a8759">"utf-8"</span><span style="color:#e8bf6a">?&gt;</span></div>
<div class="t" style="left:451.0px;top:149.0px;font-size:14.100px;font-family:'Liberation Mono',monospace;"><span style="color:#e8bf6a">&lt;LinearLayout</span></div>
<div class="t" style="left:897.0px;top:172.5px;font-size:14.100px;font-family:'Liberation Mono',monospace;"><span style="color:#6a8759">/android"</span></div>
<div class="t" style="left:888.0px;top:195.5px;font-size:14.100px;font-family:'Liberation Mono',monospace;"><span style="color:#6a8759">to"</span></div>
<div class="a" style="left:215.0px;top:166.0px;width:390.5px;height:760.0px;background:#3c3f41;border:1px solid #515457;overflow:hidden">
<div class="a" style="left:0.0px;top:0.0px;width:390.5px;height:24.6px;background:#4b6eaf;"></div>
<div class="t" style="left:28.3px;top:2.9px;letter-spacing:-0.002px;">New</div>
<svg class="a" style="left:371.5px;top:7.3px" width="6.2" height="10.4"><use href="#marr"/></svg>
<div class="a" style="left:0.0px;top:26.2px;width:390.5px;height:1.0px;background:#515456;"></div>
<div class="t" style="left:28.3px;top:31.1px;letter-spacing:-0.069px;">Link C++ Project with Gradle</div>
<div class="a" style="left:0.0px;top:54.3px;width:390.5px;height:1.0px;background:#515456;"></div>
<svg class="a" style="left:3.7px;top:59.1px" width="19.1" height="19.1" ><use href="#cut"/></svg>
<div class="t" style="left:28.3px;top:59.2px;letter-spacing:-0.114px;">Cu<u>t</u></div>
<div class="t" style="right:14.0px;top:59.2px;">Ctrl+X</div>
<svg class="a" style="left:3.7px;top:83.7px" width="19.1" height="19.1" ><use href="#copy"/></svg>
<div class="t" style="left:28.3px;top:83.8px;letter-spacing:-0.004px;"><u>C</u>opy</div>
<div class="t" style="right:14.0px;top:83.8px;">Ctrl+C</div>
<div class="t" style="left:28.3px;top:108.4px;letter-spacing:-0.456px;">Cop<u>y</u> Reference</div>
<div class="t" style="right:14.0px;top:108.4px;">Ctrl+Alt+Shift+C</div>
<div class="t" style="left:28.3px;top:133.0px;letter-spacing:-0.629px;">Copy Path...</div>
<svg class="a" style="left:3.7px;top:157.5px" width="19.1" height="19.1" ><use href="#paste"/></svg>
<div class="t" style="left:28.3px;top:157.6px;letter-spacing:-0.671px;"><u>P</u>aste</div>
<div class="t" style="right:14.0px;top:157.6px;">Ctrl+V</div>
<div class="a" style="left:0.0px;top:180.9px;width:390.5px;height:1.0px;background:#515456;"></div>
<div class="t" style="left:28.3px;top:185.8px;letter-spacing:-0.382px;">Find <u>U</u>sages</div>
<div class="t" style="right:14.0px;top:185.8px;">Alt+F7</div>
<div class="t" style="left:28.3px;top:210.4px;letter-spacing:-0.437px;">Find in <u>P</u>ath...</div>
<div class="t" style="right:14.0px;top:210.4px;">Ctrl+Shift+F</div>
<div class="t" style="left:28.3px;top:235.0px;letter-spacing:-0.578px;">Repl<u>a</u>ce in Path...</div>
<div class="t" style="right:14.0px;top:235.0px;">Ctrl+Shift+R</div>
<div class="t" style="left:28.3px;top:259.6px;letter-spacing:-0.480px;">Analy<u>z</u>e</div>
<svg class="a" style="left:371.5px;top:264.0px" width="6.2" height="10.4"><use href="#marr"/></svg>
<div class="a" style="left:0.0px;top:282.9px;width:390.5px;height:1.0px;background:#515456;"></div>
<div class="t" style="left:28.3px;top:287.7px;letter-spacing:-0.336px;"><u>R</u>efactor</div>
<svg class="a" style="left:371.5px;top:292.1px" width="6.2" height="10.4"><use href="#marr"/></svg>
<div class="a" style="left:0.0px;top:311.0px;width:390.5px;height:1.0px;background:#515456;"></div>
<div class="t" style="left:28.3px;top:315.9px;letter-spacing:-0.139px;">Add to F<u>a</u>vorites</div>
<svg class="a" style="left:371.5px;top:320.3px" width="6.2" height="10.4"><use href="#marr"/></svg>
<svg class="a" style="left:3.7px;top:340.4px" width="19.1" height="19.1" ><use href="#rm"/></svg>
<div class="t" style="left:28.3px;top:340.5px;letter-spacing:-0.289px;">Show In Resource Manager</div>
<div class="t" style="right:14.0px;top:340.5px;">Ctrl+Shift+T</div>
<div class="a" style="left:0.0px;top:363.8px;width:390.5px;height:1.0px;background:#515456;"></div>
<div class="t" style="left:28.3px;top:368.7px;letter-spacing:-0.209px;"><u>R</u>eformat Code</div>
<div class="t" style="right:14.0px;top:368.7px;">Ctrl+Alt+L</div>
<div class="t" style="left:28.3px;top:393.3px;letter-spacing:-0.022px;">Optimi<u>z</u>e Imports</div>
<div class="t" style="right:14.0px;top:393.3px;">Ctrl+Alt+O</div>
<div class="t" style="left:28.3px;top:417.9px;letter-spacing:-0.651px;"><u>D</u>elete...</div>
<div class="t" style="right:14.0px;top:417.9px;">Delete</div>
<div class="a" style="left:0.0px;top:441.1px;width:390.5px;height:1.0px;background:#515456;"></div>
<svg class="a" style="left:3.7px;top:445.9px" width="19.1" height="19.1" ><use href="#run"/></svg>
<div class="t" style="left:28.3px;top:446.0px;letter-spacing:-0.041px;">R<u>u</u>n 'Tests in 'drawable''</div>
<div class="t" style="right:14.0px;top:446.0px;">Ctrl+Shift+F10</div>
<svg class="a" style="left:3.7px;top:470.5px" width="19.1" height="19.1" ><use href="#debug"/></svg>
<div class="t" style="left:28.3px;top:470.6px;letter-spacing:0.011px;"><u>D</u>ebug 'Tests in 'drawable''</div>
<svg class="a" style="left:3.7px;top:495.1px" width="19.1" height="19.1" ><use href="#cover"/></svg>
<div class="t" style="left:28.3px;top:495.2px;letter-spacing:-0.053px;">Run 'Tests in 'drawable'' with Co<u>v</u>erage</div>
<div class="a" style="left:0.0px;top:518.5px;width:390.5px;height:1.0px;background:#515456;"></div>
<svg class="a" style="left:3.7px;top:523.2px" width="19.1" height="19.1" ><use href="#create"/></svg>
<div class="t" style="left:28.3px;top:523.4px;letter-spacing:-0.195px;">Create 'Tests in 'drawable''...</div>
<div class="t" style="left:28.3px;top:548.0px;letter-spacing:-0.274px;">Show in Explorer</div>
<div class="t" style="left:28.3px;top:572.6px;letter-spacing:-0.217px;">Directory <u>P</u>ath</div>
<div class="t" style="right:14.0px;top:572.6px;">Ctrl+Alt+F12</div>
<svg class="a" style="left:3.7px;top:597.0px" width="19.1" height="19.1" ><use href="#term"/></svg>
<div class="t" style="left:28.3px;top:597.2px;letter-spacing:-0.070px;">Open in Terminal</div>
<div class="a" style="left:0.0px;top:620.5px;width:390.5px;height:1.0px;background:#515456;"></div>
<div class="t" style="left:28.3px;top:625.3px;letter-spacing:-0.207px;">Local <u>H</u>istory</div>
<svg class="a" style="left:371.5px;top:629.7px" width="6.2" height="10.4"><use href="#marr"/></svg>
<svg class="a" style="left:3.7px;top:649.8px" width="19.1" height="19.1" ><use href="#reload"/></svg>
<div class="t" style="left:28.3px;top:649.9px;letter-spacing:-0.127px;">Reload from Disk</div>
<div class="a" style="left:0.0px;top:673.2px;width:390.5px;height:1.0px;background:#515456;"></div>
<svg class="a" style="left:3.7px;top:678.0px" width="19.1" height="19.1" ><use href="#compare"/></svg>
<div class="t" style="left:28.3px;top:678.1px;letter-spacing:-0.358px;">Compare With...</div>
<div class="t" style="right:14.0px;top:678.1px;">Ctrl+D</div>
<div class="a" style="left:0.0px;top:701.4px;width:390.5px;height:1.0px;background:#515456;"></div>
<div class="t" style="left:28.3px;top:706.3px;letter-spacing:-0.148px;">Mark Directory as</div>
<svg class="a" style="left:371.5px;top:710.7px" width="6.2" height="10.4"><use href="#marr"/></svg>
<div class="t" style="left:28.3px;top:730.9px;letter-spacing:-0.519px;">Remove BOM</div>
</div>
<div class="a" style="left:600.0px;top:164.3px;width:296.5px;height:680.7px;background:#3c3f41;border:1px solid #515457;overflow:hidden">
<svg class="a" style="left:3.0px;top:2.8px" width="19.1" height="19.1" ><use href="#ktfile"/></svg>
<div class="t" style="left:28.0px;top:2.9px;letter-spacing:-0.267px;">Kotlin File/Class</div>
<div class="a" style="left:0.0px;top:24.6px;width:296.5px;height:24.6px;background:#4b6eaf;"></div>
<svg class="a" style="left:3.0px;top:27.4px" width="19.1" height="19.1" ><use href="#xml"/></svg>
<div class="t" style="left:28.0px;top:27.5px;letter-spacing:-0.366px;">Drawable Resource File</div>
<svg class="a" style="left:3.0px;top:52.0px" width="19.1" height="19.1" ><use href="#folder"/></svg>
<div class="t" style="left:28.0px;top:52.1px;letter-spacing:-0.185px;">Sample Data Directory</div>
<svg class="a" style="left:3.0px;top:76.6px" width="19.1" height="19.1" ><use href="#txt"/></svg>
<div class="t" style="left:28.0px;top:76.7px;letter-spacing:-0.542px;">File</div>
<svg class="a" style="left:3.0px;top:101.2px" width="19.1" height="19.1" ><use href="#scratch"/></svg>
<div class="t" style="left:28.0px;top:101.3px;letter-spacing:-0.432px;">Scratch File</div>
<div class="t" style="right:13.0px;top:101.3px;">Ctrl+Alt+Shift+Insert</div>
<svg class="a" style="left:3.0px;top:125.8px" width="19.1" height="19.1" ><use href="#folder"/></svg>
<div class="t" style="left:28.0px;top:125.9px;letter-spacing:-0.001px;">Directory</div>
<div class="a" style="left:0.0px;top:149.2px;width:296.5px;height:1.0px;background:#515456;"></div>
<svg class="a" style="left:3.0px;top:153.9px" width="19.1" height="19.1" ><use href="#cppclass"/></svg>
<div class="t" style="left:28.0px;top:154.1px;letter-spacing:-0.336px;">C++ Class</div>
<svg class="a" style="left:3.0px;top:178.5px" width="19.1" height="19.1" ><use href="#cpp"/></svg>
<div class="t" style="left:28.0px;top:178.7px;letter-spacing:-0.199px;">C/C++ Source File</div>
<svg class="a" style="left:3.0px;top:203.1px" width="19.1" height="19.1" ><use href="#hdr"/></svg>
<div class="t" style="left:28.0px;top:203.3px;letter-spacing:-0.121px;">C/C++ Header File</div>
<div class="a" style="left:0.0px;top:226.6px;width:296.5px;height:1.0px;background:#515456;"></div>
<svg class="a" style="left:3.0px;top:231.3px" width="19.1" height="19.1" ><use href="#android"/></svg>
<div class="t" style="left:28.0px;top:231.5px;letter-spacing:-0.231px;">Image Asset</div>
<svg class="a" style="left:3.0px;top:255.9px" width="19.1" height="19.1" ><use href="#android"/></svg>
<div class="t" style="left:28.0px;top:256.1px;letter-spacing:-0.198px;">Vector Asset</div>
<div class="a" style="left:0.0px;top:279.4px;width:296.5px;height:1.0px;background:#515456;"></div>
<svg class="a" style="left:3.0px;top:284.1px" width="19.1" height="19.1" ><use href="#ktscript"/></svg>
<div class="t" style="left:28.0px;top:284.3px;letter-spacing:-0.079px;">Kotlin Script</div>
<svg class="a" style="left:3.0px;top:308.8px" width="19.1" height="19.1" ><use href="#ktscript"/></svg>
<div class="t" style="left:28.0px;top:308.9px;letter-spacing:-0.069px;">Kotlin Worksheet</div>
<div class="a" style="left:0.0px;top:332.2px;width:296.5px;height:1.0px;background:#515456;"></div>
<svg class="a" style="left:3.0px;top:337.0px" width="19.1" height="19.1" ><use href="#android"/></svg>
<div class="t" style="left:28.0px;top:337.1px;letter-spacing:-0.587px;">AIDL</div>
<svg class="a" style="left:277.5px;top:341.5px" width="6.2" height="10.4"><use href="#marr"/></svg>
<svg class="a" style="left:3.0px;top:361.6px" width="19.1" height="19.1" ><use href="#android"/></svg>
<div class="t" style="left:28.0px;top:361.7px;letter-spacing:0.062px;">Activity</div>
<svg class="a" style="left:277.5px;top:366.1px" width="6.2" height="10.4"><use href="#marr"/></svg>
<svg class="a" style="left:3.0px;top:386.2px" width="19.1" height="19.1" ><use href="#android"/></svg>
<div class="t" style="left:28.0px;top:386.3px;letter-spacing:0.096px;">Automotive</div>
<svg class="a" style="left:277.5px;top:390.7px" width="6.2" height="10.4"><use href="#marr"/></svg>
<svg class="a" style="left:3.0px;top:410.8px" width="19.1" height="19.1" ><use href="#android"/></svg>
<div class="t" style="left:28.0px;top:410.9px;letter-spacing:-0.086px;">Folder</div>
<svg class="a" style="left:277.5px;top:415.3px" width="6.2" height="10.4"><use href="#marr"/></svg>
<svg class="a" style="left:3.0px;top:435.4px" width="19.1" height="19.1" ><use href="#android"/></svg>
<div class="t" style="left:28.0px;top:435.5px;letter-spacing:-0.024px;">Fragment</div>
<svg class="a" style="left:277.5px;top:439.9px" width="6.2" height="10.4"><use href="#marr"/></svg>
<svg class="a" style="left:3.0px;top:460.0px" width="19.1" height="19.1" ><use href="#android"/></svg>
<div class="t" style="left:28.0px;top:460.1px;letter-spacing:-0.061px;">Google</div>
<svg class="a" style="left:277.5px;top:464.5px" width="6.2" height="10.4"><use href="#marr"/></svg>
<svg class="a" style="left:3.0px;top:484.6px" width="19.1" height="19.1" ><use href="#android"/></svg>
<div class="t" style="left:28.0px;top:484.7px;letter-spacing:-0.103px;">Other</div>
<svg class="a" style="left:277.5px;top:489.1px" width="6.2" height="10.4"><use href="#marr"/></svg>
<svg class="a" style="left:3.0px;top:509.2px" width="19.1" height="19.1" ><use href="#android"/></svg>
<div class="t" style="left:28.0px;top:509.3px;letter-spacing:-0.431px;">Service</div>
<svg class="a" style="left:277.5px;top:513.7px" width="6.2" height="10.4"><use href="#marr"/></svg>
<svg class="a" style="left:3.0px;top:533.8px" width="19.1" height="19.1" ><use href="#android"/></svg>
<div class="t" style="left:28.0px;top:533.9px;letter-spacing:-0.143px;">UI Component</div>
<svg class="a" style="left:277.5px;top:538.3px" width="6.2" height="10.4"><use href="#marr"/></svg>
<svg class="a" style="left:3.0px;top:558.4px" width="19.1" height="19.1" ><use href="#android"/></svg>
<div class="t" style="left:28.0px;top:558.5px;letter-spacing:-0.142px;">Wear</div>
<svg class="a" style="left:277.5px;top:562.9px" width="6.2" height="10.4"><use href="#marr"/></svg>
<svg class="a" style="left:3.0px;top:583.0px" width="19.1" height="19.1" ><use href="#android"/></svg>
<div class="t" style="left:28.0px;top:583.1px;letter-spacing:0.386px;">Widget</div>
<svg class="a" style="left:277.5px;top:587.5px" width="6.2" height="10.4"><use href="#marr"/></svg>
<svg class="a" style="left:3.0px;top:607.6px" width="19.1" height="19.1" ><use href="#android"/></svg>
<div class="t" style="left:28.0px;top:607.7px;letter-spacing:-0.281px;">XML</div>
<svg class="a" style="left:277.5px;top:612.1px" width="6.2" height="10.4"><use href="#marr"/></svg>
<svg class="a" style="left:3.0px;top:632.2px" width="19.1" height="19.1" ><use href="#gear"/></svg>
<div class="t" style="left:28.0px;top:632.3px;letter-spacing:-0.052px;">EditorConfig File</div>
<svg class="a" style="left:3.0px;top:656.8px" width="19.1" height="19.1" ><use href="#bundle"/></svg>
<div class="t" style="left:28.0px;top:656.9px;letter-spacing:-0.338px;">Resource Bundle</div>
</div>
</body></html>
